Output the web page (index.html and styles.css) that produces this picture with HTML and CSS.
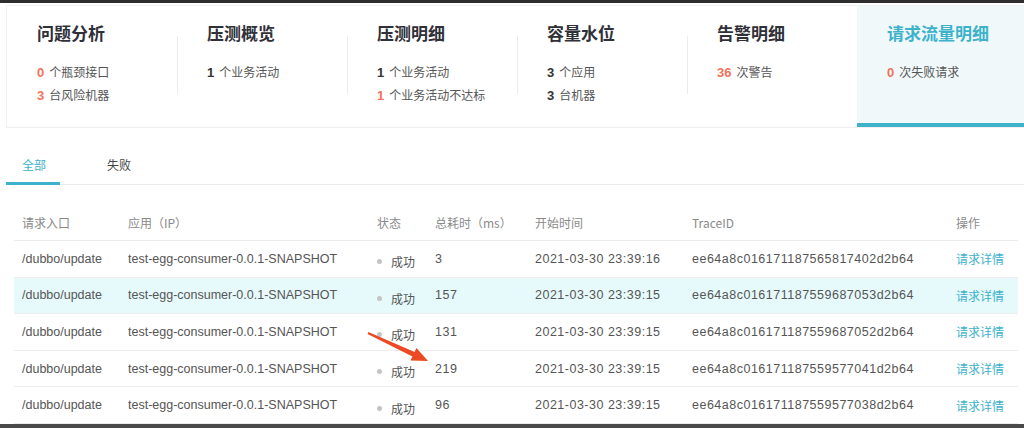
FILE: index.html
```html
<!DOCTYPE html>
<html lang="zh-CN">
<head>
<meta charset="utf-8">
<title>请求流量明细</title>
<link rel="stylesheet" href="styles.css">
</head>
<body>
<div class="page">
  <div class="topbar"></div>
  <div class="cards">
    <div class="card">
      <div class="card-title">问题分析</div>
      <div class="card-line"><b class="warn">0</b>个瓶颈接口</div>
      <div class="card-line"><b class="warn">3</b>台风险机器</div>
    </div>
    <div class="card divided">
      <div class="card-title">压测概览</div>
      <div class="card-line"><b>1</b>个业务活动</div>
    </div>
    <div class="card divided">
      <div class="card-title">压测明细</div>
      <div class="card-line"><b>1</b>个业务活动</div>
      <div class="card-line"><b class="warn">1</b>个业务活动不达标</div>
    </div>
    <div class="card divided">
      <div class="card-title">容量水位</div>
      <div class="card-line"><b>3</b>个应用</div>
      <div class="card-line"><b>3</b>台机器</div>
    </div>
    <div class="card divided">
      <div class="card-title">告警明细</div>
      <div class="card-line"><b class="warn">36</b>次警告</div>
    </div>
    <div class="card active">
      <div class="card-title">请求流量明细</div>
      <div class="card-line"><b class="warn">0</b>次失败请求</div>
    </div>
  </div>

  <div class="tabs">
    <div class="tab tab-active">全部</div>
    <div class="tab">失败</div>
  </div>

  <div class="table-wrap">
    <div class="row head">
      <div class="c c1">请求入口</div>
      <div class="c c2">应用（IP）</div>
      <div class="c c3">状态</div>
      <div class="c c4">总耗时（ms）</div>
      <div class="c c5">开始时间</div>
      <div class="c c6">TraceID</div>
      <div class="c c7">操作</div>
    </div>
    <div class="row">
      <div class="c c1">/dubbo/update</div>
      <div class="c c2">test-egg-consumer-0.0.1-SNAPSHOT</div>
      <div class="c c3"><span class="status"><i class="dot"></i>成功</span></div>
      <div class="c c4 num">3</div>
      <div class="c c5 num">2021-03-30 23:39:16</div>
      <div class="c c6 num">ee64a8c016171187565817402d2b64</div>
      <div class="c c7"><a class="link">请求详情</a></div>
    </div>
    <div class="row hl">
      <div class="c c1">/dubbo/update</div>
      <div class="c c2">test-egg-consumer-0.0.1-SNAPSHOT</div>
      <div class="c c3"><span class="status"><i class="dot"></i>成功</span></div>
      <div class="c c4 num">157</div>
      <div class="c c5 num">2021-03-30 23:39:15</div>
      <div class="c c6 num">ee64a8c016171187559687053d2b64</div>
      <div class="c c7"><a class="link">请求详情</a></div>
    </div>
    <div class="row">
      <div class="c c1">/dubbo/update</div>
      <div class="c c2">test-egg-consumer-0.0.1-SNAPSHOT</div>
      <div class="c c3"><span class="status"><i class="dot"></i>成功</span></div>
      <div class="c c4 num">131</div>
      <div class="c c5 num">2021-03-30 23:39:15</div>
      <div class="c c6 num">ee64a8c016171187559687052d2b64</div>
      <div class="c c7"><a class="link">请求详情</a></div>
    </div>
    <div class="row">
      <div class="c c1">/dubbo/update</div>
      <div class="c c2">test-egg-consumer-0.0.1-SNAPSHOT</div>
      <div class="c c3"><span class="status"><i class="dot"></i>成功</span></div>
      <div class="c c4 num">219</div>
      <div class="c c5 num">2021-03-30 23:39:15</div>
      <div class="c c6 num">ee64a8c016171187559577041d2b64</div>
      <div class="c c7"><a class="link">请求详情</a></div>
    </div>
    <div class="row">
      <div class="c c1">/dubbo/update</div>
      <div class="c c2">test-egg-consumer-0.0.1-SNAPSHOT</div>
      <div class="c c3"><span class="status"><i class="dot"></i>成功</span></div>
      <div class="c c4 num">96</div>
      <div class="c c5 num">2021-03-30 23:39:15</div>
      <div class="c c6 num">ee64a8c016171187559577038d2b64</div>
      <div class="c c7"><a class="link">请求详情</a></div>
    </div>
    <svg class="arrow" width="80" height="50" viewBox="360 320 80 50" xmlns="http://www.w3.org/2000/svg">
      <polygon fill="#ec4a24" points="367.6,332.9 368.4,331.1 414.6,350.9 416.5,346.9 428,360 410.5,359.5 412.4,355.5"/>
    </svg>
  </div>
  <div class="bottombar"></div>
</div>
</body>
</html>
```

FILE: styles.css
```css
* { box-sizing: border-box; }
html, body { margin: 0; padding: 0; background: #fff; }
body {
  font-family: "Liberation Sans", "Noto Sans CJK SC", sans-serif;
  color: #555;
  font-size: 12px;
}
.page {
  width: 1024px;
  height: 428px;
  overflow: hidden;
  position: relative;
}
.topbar {
  height: 3px;
  background: #2e2e2e;
}
.cards {
  margin: 2px 0 0 6px;
  height: 123px;
  display: grid;
  grid-template-columns: 170px 170px 170px 170px 170px 1fr;
  border: 1px solid #f0f0f0;
  border-right: none;
}
.card {
  padding: 17px 0 0 30px;
  background: #fff;
}
.card.divided {
  background: linear-gradient(#ececec, #ececec) left 30px / 1px 58px no-repeat;
}
.card.active {
  background: #f1f8fa;
  border-bottom: 4px solid #3db2c9;
}
.card-title {
  font-size: 17px;
  line-height: 24px;
  font-weight: bold;
  color: #2f3038;
  margin-bottom: 15px;
}
.card.active .card-title { color: #3db2cb; }
.card-line {
  font-size: 12px;
  line-height: 20px;
  color: #555;
  margin-bottom: 2px;
  font-family: "Noto Sans CJK SC", "Liberation Sans", sans-serif;
}
.card-line b {
  font-family: "Liberation Sans", sans-serif;
  font-weight: bold;
  font-size: 13px;
  color: #333;
  margin-right: 5px;
}
.card-line b.warn { color: #f0735a; }

.tabs {
  margin: 19px 0 0 6px;
  display: flex;
  border-bottom: 1px solid #ececec;
  height: 38px;
}
.tab {
  width: 54px;
  padding-left: 16px;
  line-height: 35px;
  font-size: 12px;
  color: #444;
  font-family: "Noto Sans CJK SC", sans-serif;
  margin-right: 31px;
}
.tab.tab-active {
  color: #3db2cb;
  border-bottom: 3px solid #3db2cb;
  margin-bottom: -1px;
}

.table-wrap {
  margin: 20px 6px 0 14px;
  position: relative;
  font-size: 12.5px;
}
.row {
  display: flex;
  height: 36.6px;
  align-items: center;
  border-bottom: 1px solid #ececec;
  color: #555;
}
.row.head {
  height: 36px;
  font-size: 12px;
  color: #8a8a8a;
  font-family: "Noto Sans CJK SC", "Liberation Sans", sans-serif;
}
.row.hl { background: #e6fafb; }
.c {
  padding-left: 8px;
  white-space: nowrap;
  overflow: hidden;
}
.num { letter-spacing: 0.5px; }
.c1 { width: 106px; }
.c2 { width: 249px; }
.c3 { width: 58px; }
.c4 { width: 100px; }
.c5 { width: 157px; }
.c6 { width: 264px; }
.c7 { flex: 1; }
.status {
  display: inline-flex;
  align-items: center;
  margin-top: 6px;
  font-size: 12px;
  font-family: "Noto Sans CJK SC", sans-serif;
}
.dot {
  width: 5px;
  height: 5px;
  border-radius: 50%;
  background: #c4c4c4;
  margin-right: 9px;
}
.link {
  color: #3db2cb;
  font-size: 12px;
  font-family: "Noto Sans CJK SC", sans-serif;
}
.arrow {
  position: absolute;
  left: 346px;
  top: 116px;
}
.bottombar {
  position: absolute;
  left: 0;
  right: 0;
  bottom: 0;
  height: 4px;
  background: #4a4a4a;
}
```
